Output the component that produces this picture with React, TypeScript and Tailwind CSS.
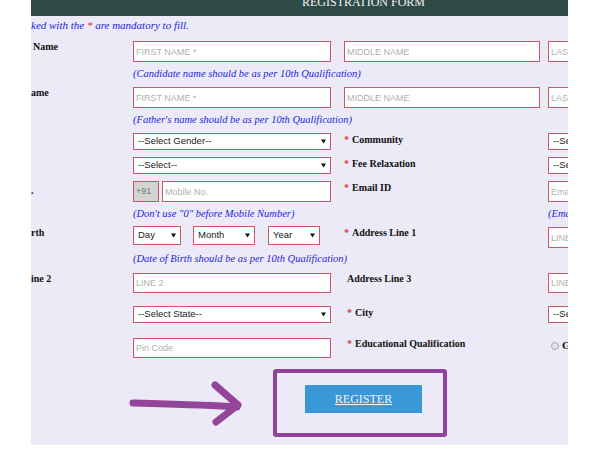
import type { ReactNode } from "react";

const serif = "font-['Liberation_Serif','Times_New_Roman',serif]";
const sans = "font-['Liberation_Sans',Arial,sans-serif]";
const border = "border border-[#c7596b]";

function Row({
  className = "",
  hint,
  label,
  c2,
  c3,
  c4,
}: {
  className?: string;
  hint?: boolean;
  label?: ReactNode;
  c2?: ReactNode;
  c3?: ReactNode;
  c4?: ReactNode;
}) {
  return (
    <div className={`flex shrink-0 ${hint ? "items-center" : "items-start"} ${className}`}>
      <div className="w-[102px] shrink-0">{label}</div>
      <div className="w-[198px] shrink-0">{c2}</div>
      <div className="ml-[13px] w-[204px] shrink-0">{c3}</div>
      <div className="w-[198px] shrink-0">{c4}</div>
    </div>
  );
}

function Label({ children, star, className = "" }: { children: ReactNode; star?: boolean; className?: string }) {
  return (
    <div className={`${serif} whitespace-nowrap text-[10px] font-bold leading-[11px] text-[#111] ${className}`}>
      {star && <span className="mr-[3px] text-[#e3343f]">*</span>}
      {children}
    </div>
  );
}

function Hint({ children }: { children: ReactNode }) {
  return (
    <div className={`${serif} whitespace-nowrap text-[10.5px] italic leading-[12px] text-[#2424e0]`}>{children}</div>
  );
}

function Input({ placeholder, className = "w-[198px] h-[21px]" }: { placeholder: string; className?: string }) {
  return (
    <input
      readOnly
      placeholder={placeholder}
      className={`${border} ${sans} block bg-white pl-[2px] text-[9px] outline-none placeholder:text-[#b0b0b0] ${className}`}
    />
  );
}

function Select({ text, className = "w-[198px] h-[17px]" }: { text: string; className?: string }) {
  return (
    <div
      className={`${border} ${sans} flex items-center justify-between bg-white pl-[4px] pr-[4px] text-[9.5px] text-[#222] ${className}`}
    >
      <span className="whitespace-nowrap">{text}</span>
      <svg width="5" height="5" viewBox="0 0 6 6" className="shrink-0">
        <path d="M0 0.5h6L3 5.5z" fill="#111" />
      </svg>
    </div>
  );
}

function Arrow() {
  return (
    <svg width="116" height="46" viewBox="0 0 116 46" className="ml-[97px] mt-[11px] shrink-0">
      <g fill="none" stroke="#93459b" strokeWidth="7" strokeLinecap="round" strokeLinejoin="round">
        <path d="M5 23 C40 24 80 25 109 27" />
        <path d="M87 5 L110 25 L88 42" />
      </g>
    </svg>
  );
}

export default function App() {
  return (
    <div className="h-[450px] w-[600px] bg-white pl-[31px]">
      <div className="flex h-[445px] w-[537px] flex-col overflow-hidden bg-[#eceaf7]">
        <div className="h-[16px] shrink-0 overflow-hidden bg-[#2d4a47] pl-[271px]">
          <div className={`${serif} -mt-[2px] whitespace-nowrap text-[12px] leading-[9px] text-[#f2f2f2]`}>
            REGISTRATION FORM
          </div>
        </div>

        <div className={`${serif} h-[18px] shrink-0 whitespace-nowrap text-[11px] italic leading-[18px] text-[#2424e0]`}>
          ked with the <span className="text-[#e3343f]">*</span> are mandatory to fill.
        </div>

        <Row
          className="mt-[7px] h-[21px]"
          label={<Label className="pl-[2px]">Name</Label>}
          c2={<Input placeholder="FIRST NAME *" />}
          c3={<Input placeholder="MIDDLE NAME" className="h-[21px] w-[196px]" />}
          c4={<Input placeholder="LAST NAME" />}
        />
        <Row hint className="h-[24px]" c2={<Hint>(Candidate name should be as per 10th Qualification)</Hint>} />
        <Row
          className="mt-[1px] h-[21px]"
          label={<Label>ame</Label>}
          c2={<Input placeholder="FIRST NAME *" />}
          c3={<Input placeholder="MIDDLE NAME" className="h-[21px] w-[196px]" />}
          c4={<Input placeholder="LAST NAME" />}
        />
        <Row hint className="h-[23px]" c2={<Hint>(Father's name should be as per 10th Qualification)</Hint>} />
        <Row
          className="mt-[2px] h-[17px]"
          c2={<Select text="--Select Gender--" />}
          c3={<Label star className="pt-[1px]">Community</Label>}
          c4={<Select text="--Select--" />}
        />
        <Row
          className="mt-[7px] h-[17px]"
          c2={<Select text="--Select--" />}
          c3={<Label star className="pt-[1px]">Fee Relaxation</Label>}
          c4={<Select text="--Select--" />}
        />
        <Row
          className="mt-[7px] h-[21px]"
          label={<Label className="pt-[4px]">.</Label>}
          c2={
            <div className="flex gap-[3px]">
              <div
                className={`${border} ${sans} flex h-[21px] w-[26px] items-center bg-[#d4d4d4] pl-[2px] text-[9px] text-[#777]`}
              >
                +91
              </div>
              <Input placeholder="Mobile No." className="h-[21px] w-[169px]" />
            </div>
          }
          c3={<Label star className="pt-[1px]">Email ID</Label>}
          c4={<Input placeholder="Email ID" />}
        />
        <Row
          hint
          className="h-[24px]"
          c2={<Hint>(Don't use "0" before Mobile Number)</Hint>}
          c4={<Hint>(Email ID will be used for communication)</Hint>}
        />
        <Row
          className="h-[22px]"
          label={<Label className="pt-[1px]">rth</Label>}
          c2={
            <div className="flex">
              <Select text="Day" className="h-[19px] w-[48px]" />
              <Select text="Month" className="ml-[12px] h-[19px] w-[62px]" />
              <Select text="Year" className="ml-[13px] h-[19px] w-[52px]" />
            </div>
          }
          c3={<Label star className="pt-[1px]">Address Line 1</Label>}
          c4={<Input placeholder="LINE 1" className="mt-[1px] h-[21px] w-[198px]" />}
        />
        <Row hint className="h-[22px]" c2={<Hint>(Date of Birth should be as per 10th Qualification)</Hint>} />
        <Row
          className="mt-[3px] h-[20px]"
          label={<Label>ine 2</Label>}
          c2={<Input placeholder="LINE 2" className="h-[20px] w-[198px]" />}
          c3={<Label className="pl-[3px]">Address Line 3</Label>}
          c4={<Input placeholder="LINE 3" className="h-[20px] w-[198px]" />}
        />
        <Row
          className="mt-[13px] h-[17px]"
          c2={<Select text="--Select State--" />}
          c3={<Label star className="pl-[3px] pt-[1px]">City</Label>}
          c4={<Select text="--Select--" />}
        />
        <Row
          className="mt-[15px] h-[20px]"
          c2={<Input placeholder="Pin Code" className="h-[20px] w-[198px]" />}
          c3={<Label star className="pl-[3px]">Educational Qualification</Label>}
          c4={
            <div className="flex items-center pl-[3px] pt-[2px]">
              <span className="h-[8px] w-[8px] rounded-full border border-[#a8a8a8] bg-[#e4e4e4]" />
              <span className={`${serif} ml-[3px] text-[11px] font-bold leading-[11px] text-[#111]`}>Graduate</span>
            </div>
          }
        />

        <div className="mt-[11px] flex shrink-0 items-start">
          <Arrow />
          <div className="ml-[29px] h-[68px] w-[174px] shrink-0 rounded-[3px] border-4 border-[#91429a] pl-[28px] pt-[12px]">
            <div
              className={`${serif} flex h-[28px] w-[117px] items-center justify-center bg-[#3a98d9] text-[12px] text-[#eef4fb] underline`}
            >
              REGISTER
            </div>
          </div>
        </div>
      </div>
    </div>
  );
}
